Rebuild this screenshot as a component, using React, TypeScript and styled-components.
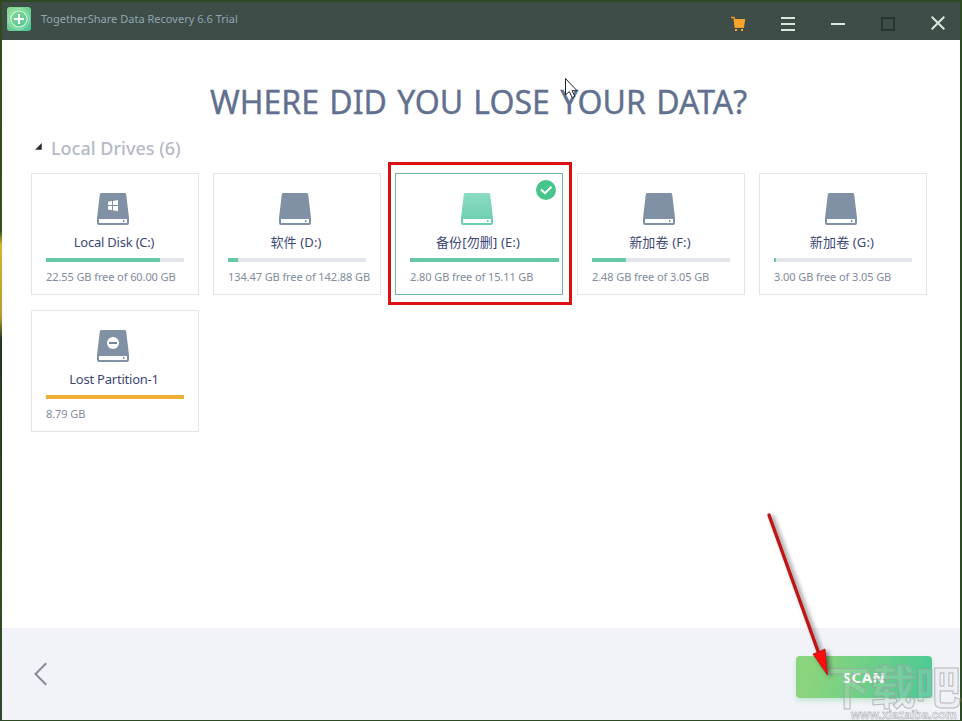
import React from "react";
import styled, { createGlobalStyle } from "styled-components";

const GlobalStyle = createGlobalStyle`
  * { box-sizing: border-box; }
  body { margin: 0; overflow: hidden; font-family: "Noto Sans", "Noto Sans CJK SC", sans-serif; }
  button { border: 0; padding: 0; background: none; font: inherit; }
  svg { display: block; }
`;

const Desktop = styled.div`
  position: relative;
  width: 962px;
  height: 721px;
  padding: 2px 2px 1px 2px;
  background: linear-gradient(180deg, #2f4a1c 0, #31511f 32%, #d9b52b 34%, #b59a2c 44%, #203a1b 47%, #2e4d1c 80%, #33452f 100%);
  background-size: 2px 100%;
  background-repeat: no-repeat;
  background-color: #2d4a25;
  overflow: hidden;
`;

const Window = styled.main`
  display: flex;
  flex-direction: column;
  width: 958px;
  height: 718px;
  background: #fff;
`;

const TitleBar = styled.header`
  display: flex;
  align-items: center;
  height: 38px;
  flex: none;
  padding-left: 4px;
  background: #3e4d48;
`;

const AppName = styled.span`
  flex: 1;
  margin: -4px 0 0 9px;
  font-size: 11px;
  line-height: 16px;
  letter-spacing: 0.02px;
  color: #8fa6b2;
  white-space: nowrap;
`;

const Logo = styled.div`
  margin-top: -4px;
`;

const Controls = styled.div`
  display: flex;
  margin: 6px -1px 0 0;
`;

const Control = styled.button`
  display: grid;
  place-items: center;
  width: 50px;
  height: 38px;
  &:last-child { width: 46px; margin-left: 2px; margin-top: -1px; }
`;

const Content = styled.section`
  flex: 1;
  padding: 40px 0 0 29px;
`;

const Heading = styled.h1`
  margin: 0 0 0 179px;
  font-size: 32px;
  line-height: 44px;
  font-weight: 400;
  letter-spacing: 0;
  word-spacing: 2px;
  color: #62708f;
  -webkit-text-stroke: 0.35px #62708f;
  white-space: nowrap;
`;

const GroupHeader = styled.div`
  display: flex;
  align-items: center;
  height: 26px;
  margin: 11px 0 12px 4px;
`;

const GroupArrow = styled.div`
  margin-top: -3px;
`;

const GroupTitle = styled.h2`
  margin: 0 0 0 8px;
  font-size: 18px;
  line-height: 26px;
  font-weight: 500;
  color: #b5b9c8;
  white-space: nowrap;
`;

const DriveGrid = styled.div`
  display: grid;
  grid-template-columns: repeat(5, 168px);
  grid-auto-rows: 122px;
  gap: 15px 14px;
`;

const Card = styled.article<{ $selected?: boolean }>`
  position: relative;
  display: flex;
  flex-direction: column;
  padding: 19px 14px 0;
  border: 1px solid ${(p) => (p.$selected ? "#6ab99c" : "#e2e5e9")};
`;

const DriveArt = styled.div`
  width: 32px;
  height: 32px;
  margin-left: 51px;
`;

const DriveName = styled.div<{ $latin?: boolean }>`
  height: 20px;
  margin: 7px 2px 0 0;
  font-size: 13px;
  line-height: 20px;
  letter-spacing: ${(p) => (p.$latin ? "-0.22px" : "0.15px")};
  text-align: center;
  color: #3c4777;
  white-space: nowrap;
`;

const Track = styled.div`
  flex: none;
  height: 4px;
  margin-top: 6px;
  background: #e1e5e9;
`;

const Fill = styled.div<{ $warm?: boolean }>`
  height: 4px;
  background: ${(p) => (p.$warm ? "#edb034" : "#66c8a6")};
`;

const Usage = styled.div`
  margin-top: 7px;
  font-size: 11px;
  line-height: 16px;
  letter-spacing: -0.09px;
  color: #818b9c;
  white-space: nowrap;
`;

const CheckBadge = styled.div`
  position: absolute;
  top: 6px;
  right: 6px;
`;

const Footer = styled.footer`
  display: flex;
  justify-content: space-between;
  height: 92px;
  padding: 28px 28px 0 32px;
  background: #f2f3f8;
`;

const BackButton = styled.button`
  width: 14px;
  height: 36px;
`;

const ScanButton = styled.button`
  width: 136px;
  height: 42px;
  border-radius: 4px;
  background: linear-gradient(105deg, #89d47d 15%, #4cca95 95%);
  box-shadow: 0 3px 5px #9bdcb288;
  color: #fff;
  font-size: 15px;
  font-weight: 700;
  letter-spacing: 0.5px;
`;

const Highlight = styled.div`
  position: absolute;
  left: 388px;
  top: 162px;
  width: 184px;
  height: 143px;
  border: 3px solid #dc1013;
`;

const Overlay = styled.svg`
  position: absolute;
  inset: 0;
  pointer-events: none;
`;

const Watermark = styled.div`
  position: absolute;
  left: 825px;
  top: 657px;
  width: 137px;
  height: 64px;
  pointer-events: none;
`;

const WatermarkName = styled.div`
  height: 53px;
  font: 700 46px/54px "Noto Sans CJK SC", sans-serif;
  letter-spacing: -1px;
  color: rgba(220, 224, 226, 0.2);
  -webkit-text-stroke: 1px rgba(155, 161, 165, 0.7);
  white-space: nowrap;
`;

const WatermarkSite = styled.div`
  margin: -1px 0 0 26px;
  font: 700 12px/12px "Liberation Sans", sans-serif;
  color: #f7f8fa;
  -webkit-text-stroke: 0.5px #a4a9ae;
  white-space: nowrap;
`;

type Mark = "windows" | "minus";

interface Drive {
  name: string;
  usage: string;
  fill: number;
  mark?: Mark;
  selected?: boolean;
}

const drives: Drive[] = [
  { name: "Local Disk (C:)", usage: "22.55 GB free of 60.00 GB", fill: 114, mark: "windows" },
  { name: "软件 (D:)", usage: "134.47 GB free of 142.88 GB", fill: 10 },
  { name: "备份[勿删] (E:)", usage: "2.80 GB free of 15.11 GB", fill: 149, selected: true },
  { name: "新加卷 (F:)", usage: "2.48 GB free of 3.05 GB", fill: 34 },
  { name: "新加卷 (G:)", usage: "3.00 GB free of 3.05 GB", fill: 2 },
  { name: "Lost Partition-1", usage: "8.79 GB", fill: 138, mark: "minus" },
];

function DriveIcon({ selected, mark }: { selected?: boolean; mark?: Mark }) {
  return (
    <svg width="32" height="32" viewBox="0 0 32 32">
      <defs>
        <linearGradient id="driveGreen" x1="0" y1="0" x2="0" y2="1">
          <stop offset="0" stopColor="#8bdac3" />
          <stop offset="1" stopColor="#69ceae" />
        </linearGradient>
      </defs>
      <path
        d="M4.4 0H27.6Q29 0 29.2 1.4L32 25V30Q32 32 30 32H2Q0 32 0 30V25L2.8 1.4Q3 0 4.4 0Z"
        fill={selected ? "url(#driveGreen)" : "#8090a5"}
      />
      <path d="M2 26H30V30H2Z" fill="#fbfdff" />
      <rect x="26" y="27" width="1.5" height="2" fill={selected ? "#69ceae" : "#8090a5"} />
      {mark === "windows" && (
        <path d="M11 8.8 15 8.1V12.1H11ZM16 7.9 21 7V12.1H16ZM11 13.1H15V17.2L11 16.5ZM16 13.1H21V18.2L16 17.3Z" fill="#fff" />
      )}
      {mark === "minus" && (
        <>
          <circle cx="16" cy="13" r="6" fill="#fff" />
          <path d="M12 13H20" stroke="#75859a" strokeWidth="2" />
        </>
      )}
    </svg>
  );
}

function DriveCard({ drive }: { drive: Drive }) {
  return (
    <Card $selected={drive.selected}>
      <DriveArt><DriveIcon selected={drive.selected} mark={drive.mark} /></DriveArt>
      <DriveName $latin={!!drive.mark}>{drive.name}</DriveName>
      <Track><Fill $warm={drive.mark === "minus"} style={{ width: drive.fill }} /></Track>
      <Usage>{drive.usage}</Usage>
      {drive.selected && (
        <CheckBadge>
          <svg width="20" height="20" viewBox="0 0 20 20">
            <circle cx="10" cy="10" r="10" fill="#48c48d" />
            <path d="M5 9.5 9 13.2 15.5 6.7" fill="none" stroke="#fff" strokeWidth="2" />
          </svg>
        </CheckBadge>
      )}
    </Card>
  );
}

export default function App() {
  return (
    <Desktop>
      <GlobalStyle />
      <Window>
        <TitleBar>
          <Logo>
            <svg width="26" height="26" viewBox="0 0 26 26">
              <defs>
                <linearGradient id="logoGreen" x1="0" y1="0" x2="1" y2="1">
                  <stop offset="0" stopColor="#8edb91" />
                  <stop offset="1" stopColor="#48c596" />
                </linearGradient>
              </defs>
              <rect x="1" y="1" width="24" height="24" rx="3" fill="url(#logoGreen)" />
              <circle cx="13" cy="13" r="10.5" fill="none" stroke="#b8ebc4" strokeWidth=".7" />
              <circle cx="13" cy="13" r="8.2" fill="none" stroke="#d4f3da" strokeWidth="1.2" />
              <path d="M13 8V18M8 13H18" stroke="#fff" strokeWidth="2" />
            </svg>
          </Logo>
          <AppName>TogetherShare Data Recovery 6.6 Trial</AppName>
          <Controls>
            <Control aria-label="Buy">
              <svg width="16" height="16" viewBox="0 0 16 16">
                <path d="M1 1.5H4L5.3 11H14" fill="none" stroke="#f3a128" strokeWidth="1.4" />
                <path d="M4 3H15.2L14 11.5H5Z" fill="#f9a52c" />
                <rect x="5" y="13" width="2" height="2" fill="#f9a52c" />
                <rect x="11" y="13" width="2" height="2" fill="#f9a52c" />
              </svg>
            </Control>
            <Control aria-label="Menu">
              <svg width="14" height="14"><path d="M0 1H14M0 7H14M0 13H14" stroke="#d6eadb" strokeWidth="2" /></svg>
            </Control>
            <Control aria-label="Minimize">
              <svg width="14" height="14"><path d="M0 7H14" stroke="#d6eadb" strokeWidth="2" /></svg>
            </Control>
            <Control aria-label="Maximize">
              <svg width="14" height="14"><path d="M1 1H13V13H1Z" fill="none" stroke="#27352f" strokeWidth="1.8" /></svg>
            </Control>
            <Control aria-label="Close">
              <svg width="14" height="14"><path d="M.7.7 13.3 13.3M13.3.7.7 13.3" stroke="#d6eadb" strokeWidth="2" /></svg>
            </Control>
          </Controls>
        </TitleBar>
        <Content>
          <Heading>WHERE DID YOU LOSE YOUR DATA?</Heading>
          <GroupHeader>
            <GroupArrow>
              <svg width="8" height="12"><path d="M6.5 2.5V8.5H.7Z" fill="#292b30" stroke="#292b30" strokeWidth=".5" /></svg>
            </GroupArrow>
            <GroupTitle>Local Drives (6)</GroupTitle>
          </GroupHeader>
          <DriveGrid>
            {drives.map((d) => <DriveCard key={d.name} drive={d} />)}
          </DriveGrid>
        </Content>
        <Footer>
          <BackButton aria-label="Back">
            <svg width="14" height="36"><path d="M12.2 7.2 1.5 18 12.2 28.8" fill="none" stroke="#828b99" strokeWidth="2" /></svg>
          </BackButton>
          <ScanButton>SCAN</ScanButton>
        </Footer>
      </Window>
      <Highlight />
      <Watermark>
        <WatermarkName>下载吧</WatermarkName>
        <WatermarkSite>www.xiazaiba.com</WatermarkSite>
      </Watermark>
      <Overlay width="962" height="721" viewBox="0 0 962 721">
        <defs>
          <filter id="arrowShadow" x="-30%" y="-10%" width="180%" height="120%">
            <feDropShadow dx="3" dy="2" stdDeviation="2" floodColor="#222" floodOpacity=".55" />
          </filter>
        </defs>
        <path d="M565.5 78.5V95L569.3 91.5 572.2 97.5 574.8 96.3 572 90.7H577Z" fill="#fff" stroke="#222" />
        <g filter="url(#arrowShadow)">
          <path d="M769 515 819 654" stroke="#be1518" strokeWidth="3.4" strokeLinecap="round" />
          <path d="M813 654 818.5 652 825 649 827.5 675Z" fill="#fa0909" stroke="#a8181b" strokeWidth=".8" />
        </g>
      </Overlay>
    </Desktop>
  );
}
